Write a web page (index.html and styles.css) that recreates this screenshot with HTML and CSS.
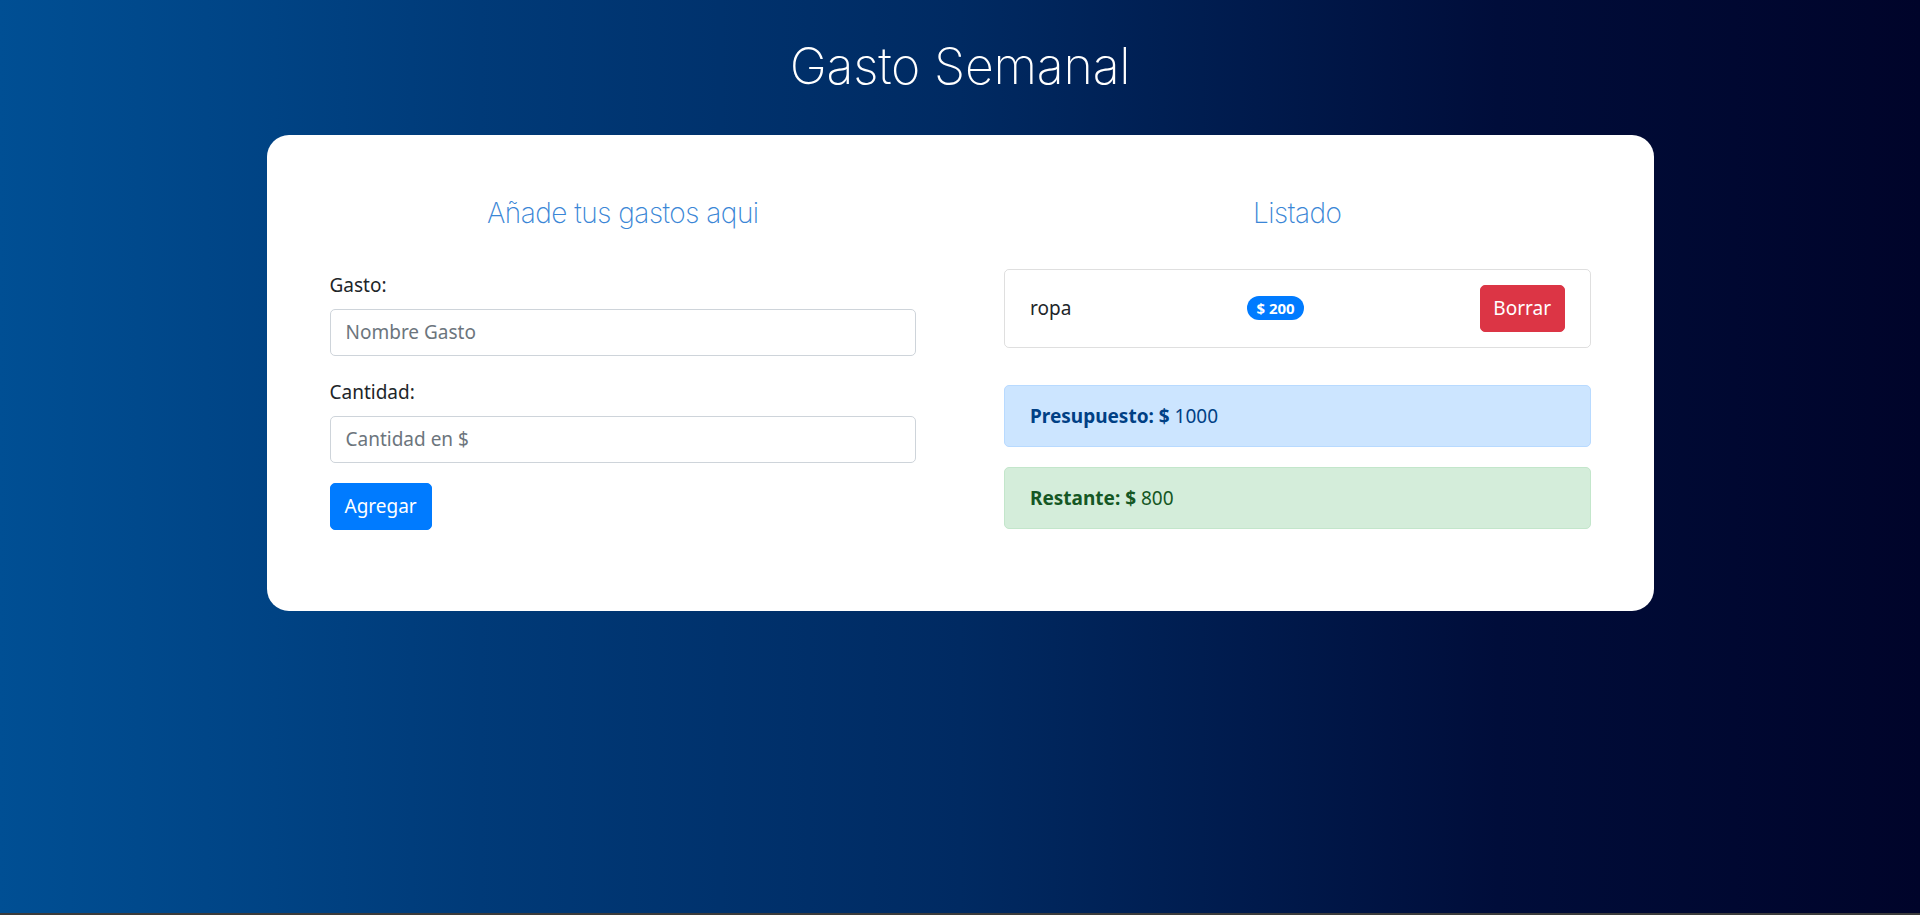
FILE: index.html
```html
<!DOCTYPE html>
<html lang="es">
<head>
<meta charset="utf-8">
<title>Gasto Semanal</title>
<link rel="stylesheet" href="styles.css">
</head>
<body>
<div class="page">
  <header class="top">
    <h1 class="title">Gasto Semanal</h1>
  </header>
  <main class="card">
    <section class="col">
      <h2 class="col-title">Añade tus gastos aqui</h2>
      <form class="form">
        <div class="form-group">
          <label class="label" for="gasto">Gasto:</label>
          <input class="input" id="gasto" type="text" placeholder="Nombre Gasto">
        </div>
        <div class="form-group">
          <label class="label" for="cantidad">Cantidad:</label>
          <input class="input" id="cantidad" type="text" placeholder="Cantidad en $">
        </div>
        <button class="btn btn-primary" type="button">Agregar</button>
      </form>
    </section>
    <section class="col">
      <h2 class="col-title">Listado</h2>
      <ul class="list">
        <li class="list-item">
          <span class="item-name">ropa</span>
          <span class="badge">$ 200</span>
          <button class="btn btn-danger" type="button">Borrar</button>
        </li>
      </ul>
      <div class="alert alert-primary"><strong>Presupuesto: $</strong> 1000</div>
      <div class="alert alert-success"><strong>Restante: $</strong> 800</div>
    </section>
  </main>
</div>
</body>
</html>
```

FILE: styles.css
```css
* {
  box-sizing: border-box;
}

html {
  background: #3b3b3b;
}

body {
  margin: 0;
  font-family: "Noto Sans", "Open Sans", sans-serif;
  font-size: 19px;
  line-height: 30px;
  color: #212529;
}

.page {
  min-height: 913px;
  background: linear-gradient(to right, #004f94 0%, #003a78 25%, #002a62 50%, #000d3a 78%, #00042a 100%);
  padding-top: 36px;
  overflow: hidden;
}

.top {
  display: flex;
  justify-content: center;
}

.title {
  margin: 0;
  font-family: "Inter", sans-serif;
  font-weight: 200;
  font-size: 50px;
  line-height: 1.2;
  letter-spacing: -0.2px;
  color: #ffffff;
}

.card {
  width: 1387px;
  margin: 39px auto 0;
  background: #ffffff;
  border-radius: 22px;
  padding: 62px 63px 62px;
  display: grid;
  grid-template-columns: 1fr 1fr;
  column-gap: 88px;
}

.col-title {
  margin: 0 0 38px;
  text-align: center;
  font-family: "Inter", sans-serif;
  font-weight: 200;
  font-size: 28px;
  line-height: 1.2;
  letter-spacing: -0.5px;
  color: #3a86d6;
}

.form {
  margin: 0;
}

.form-group {
  margin-bottom: 20px;
}

.label {
  display: block;
  margin-bottom: 10px;
  padding-top: 2px;
  line-height: 28px;
}

.input {
  display: block;
  width: 100%;
  height: 47px;
  padding: 0 15px;
  border: 1px solid #ced4da;
  border-radius: 5px;
  font-family: inherit;
  font-size: 19px;
  color: #495057;
  background: #ffffff;
}

.input::placeholder {
  color: #6c757d;
}

.btn {
  display: inline-block;
  height: 47px;
  padding: 0 14px;
  border: 1px solid transparent;
  border-radius: 5px;
  font-family: inherit;
  font-size: 19px;
  line-height: 30px;
  color: #ffffff;
  cursor: pointer;
}

.btn-primary {
  background: #007bff;
  border-color: #007bff;
}

.btn-danger {
  background: #dc3545;
  border-color: #dc3545;
  padding: 0 12.5px;
}

.list {
  list-style: none;
  margin: 0 0 37px;
  padding: 0;
}

.list-item {
  display: flex;
  align-items: center;
  justify-content: space-between;
  padding: 15px 25px;
  border: 1px solid rgba(0, 0, 0, 0.125);
  border-radius: 5px;
}

.badge {
  display: inline-block;
  padding: 4px 9.5px;
  border-radius: 12px;
  background: #007bff;
  color: #ffffff;
  font-size: 15px;
  font-weight: 700;
  line-height: 16px;
}

.alert {
  margin-bottom: 20px;
  padding: 15px 25px;
  border: 1px solid transparent;
  border-radius: 5px;
}

.alert strong {
  font-weight: 700;
}

.alert-primary {
  background: #cce5ff;
  border-color: #b8daff;
  color: #004085;
}

.alert-success {
  background: #d4edda;
  border-color: #c3e6cb;
  color: #155724;
}
```
